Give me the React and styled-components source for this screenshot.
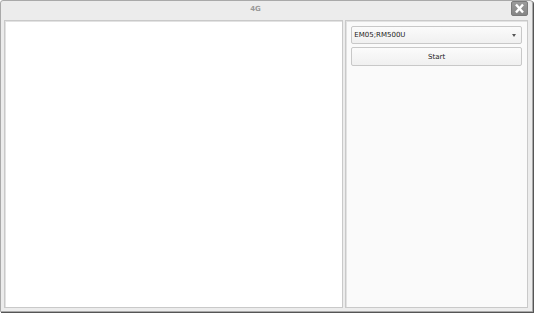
import React, { useState } from "react";
import styled, { createGlobalStyle } from "styled-components";

const GlobalStyle = createGlobalStyle`
  html, body {
    margin: 0;
    padding: 0;
    width: 534px;
    height: 313px;
    overflow: hidden;
    background: #ffffff;
  }
  #root {
    width: 534px;
    height: 313px;
  }
`;

const Win = styled.div`
  box-sizing: border-box;
  width: 533px;
  height: 312px;
  background: #ececec;
  border: 1px solid #a9a9a9;
  border-radius: 3px 3px 0 0;
  display: flex;
  flex-direction: column;
  font-family: "DejaVu Sans", sans-serif;
  box-shadow: 1px 1px 0 #555;
`;

const TitleBar = styled.div`
  height: 18px;
  position: relative;
  display: flex;
  align-items: center;
  justify-content: center;
  padding-right: 22px;
`;

const Title = styled.div`
  font-size: 7px;
  font-weight: bold;
  color: #999999;
  margin-top: -2px;
`;

const CloseBtn = styled.button`
  position: absolute;
  right: 4px;
  top: 0px;
  width: 17px;
  height: 15px;
  padding: 0;
  border: 1px solid #7a7a7a;
  border-radius: 2px;
  background: linear-gradient(#9a9a9a, #858585);
  display: flex;
  align-items: center;
  justify-content: center;
  cursor: pointer;
`;

const Body = styled.div`
  flex: 1;
  display: flex;
  gap: 2px;
  padding: 1px 4px 3px 3px;
`;

const Panel = styled.div`
  box-sizing: border-box;
  border: 1px solid #c9c9c9;
  box-shadow: inset 1px 1px 0 #e2e2e2;
  background: ${(p) => p.bg};
  width: ${(p) => p.w}px;
`;

const Side = styled(Panel)`
  display: flex;
  flex-direction: column;
  gap: 3px;
  padding: 5px 5px;
`;

const Combo = styled.div`
  box-sizing: border-box;
  height: 18px;
  border: 1px solid #c8c8c8;
  border-radius: 2px;
  background: linear-gradient(#fbfbfb, #f0f0f0);
  display: flex;
  align-items: center;
  justify-content: space-between;
  padding: 0 5px 0 2px;
  font-size: 7px;
  color: #222;
`;

const Arrow = styled.span`
  width: 0;
  height: 0;
  border-left: 2.5px solid transparent;
  border-right: 2.5px solid transparent;
  border-top: 3px solid #555;
`;

const StartBtn = styled.button`
  box-sizing: border-box;
  height: 19px;
  border: 1px solid #c8c8c8;
  border-radius: 2px;
  background: linear-gradient(#fbfbfb, #f0f0f0);
  font-family: "DejaVu Sans", sans-serif;
  font-size: 7px;
  color: #222;
  padding: 0;
  cursor: pointer;
`;

export default function App() {
  const [model] = useState("EM05;RM500U");
  return (
    <>
      <GlobalStyle />
      <Win>
        <TitleBar>
          <Title>4G</Title>
          <CloseBtn>
            <svg width="11" height="11" viewBox="0 0 11 11">
              <path d="M2 1.5 L9 9.5 M9 1.5 L2 9.5" stroke="#fff" strokeWidth="2.4" />
            </svg>
          </CloseBtn>
        </TitleBar>
        <Body>
          <Panel w={340} bg="#ffffff" />
          <Side w={183} bg="#fafafa">
            <Combo>
              {model}
              <Arrow />
            </Combo>
            <StartBtn>Start</StartBtn>
          </Side>
        </Body>
      </Win>
    </>
  );
}
